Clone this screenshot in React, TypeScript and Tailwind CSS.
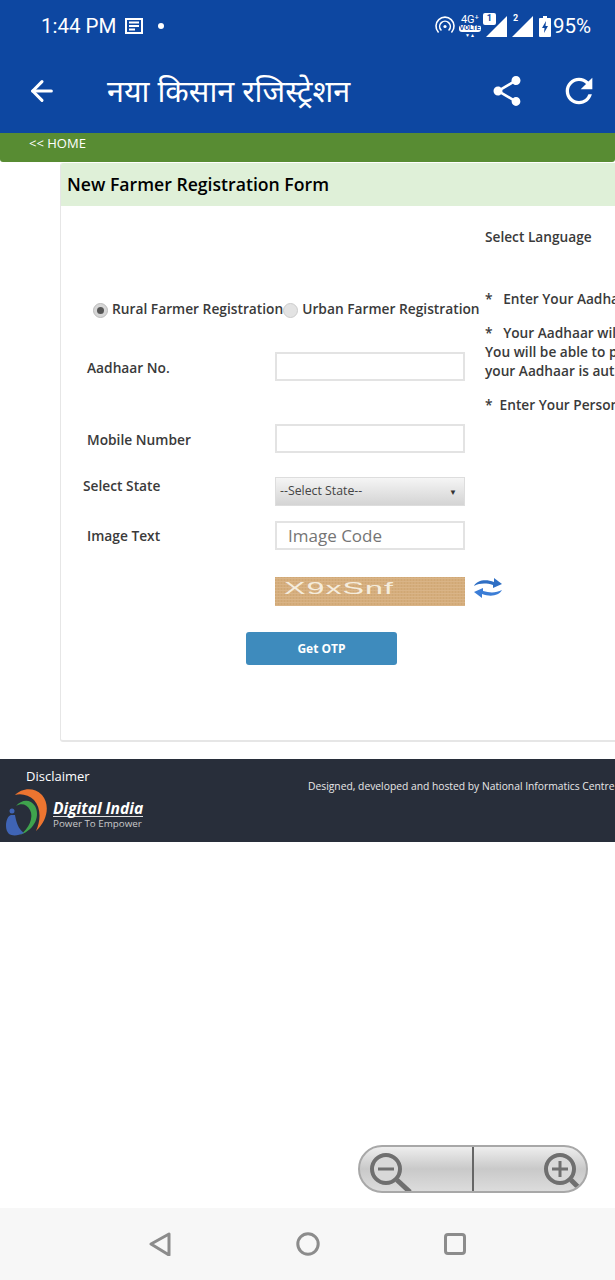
import { ArrowLeft } from "lucide-react";

const openSans = "font-['Open_Sans',sans-serif]";

function StatusBar() {
    return (
        <div className="flex h-[52px] items-center justify-between pl-[41px] pr-[24px] font-['Roboto',sans-serif] text-white">
            <div className="flex items-center">
                <span className="text-[20.5px] leading-none">1:44 PM</span>
                <svg width="18" height="16" viewBox="0 0 18 16" className="ml-[9px]">
                    <path d="M1 1h16v14H1z" fill="none" stroke="#fff" strokeWidth="2" />
                    <path d="M4 4.5h10M4 8h10M4 11.5h6" stroke="#fff" strokeWidth="2" />
                </svg>
                <span className="ml-[15px] h-[6px] w-[6px] rounded-full bg-white" />
            </div>
            <div className="flex items-center">
                <svg width="20" height="20" viewBox="0 0 20 20" fill="none" stroke="#fff" strokeWidth="1.6" strokeLinecap="round">
                    <path d="M3.2 16A9 9 0 1 1 16.8 16" />
                    <path d="M6 14a5.3 5.3 0 1 1 8 0" />
                    <circle cx="10" cy="10.5" r="1.6" fill="#fff" stroke="none" />
                </svg>
                <div className="ml-[3px] flex w-[24px] flex-col items-center leading-none">
                    <span className="text-[11px] leading-[11px]">4G⁺</span>
                    <span className="rounded-[3px] bg-white px-[1px] text-[7px] font-bold leading-[7px] text-[#0d47a1]">VOLTE</span>
                    <span className="text-[5px] leading-[7px]">▼▲</span>
                </div>
                <div className="relative ml-[3px] h-[24px] w-[24px]">
                    <svg width="24" height="24" viewBox="0 0 24 24" className="absolute left-0 top-0">
                        <path d="M1 23L22 2v21z" fill="#fff" />
                    </svg>
                    <span className="absolute -top-[1px] left-[-2px] flex h-[12px] w-[13px] items-center justify-center rounded-[2px] bg-white text-[9px] font-bold text-[#0d47a1]">1</span>
                </div>
                <div className="relative ml-[1px] h-[24px] w-[24px]">
                    <svg width="24" height="24" viewBox="0 0 24 24" className="absolute left-0 top-0">
                        <path d="M2 23L23 2v21z" fill="#fff" />
                    </svg>
                    <span className="absolute -top-[1px] left-[3px] text-[9px] font-bold leading-[11px]">2</span>
                </div>
                <svg width="12" height="21" viewBox="0 0 12 21" className="ml-[5px]">
                    <path d="M4 0h4v2h3a1 1 0 0 1 1 1v17a1 1 0 0 1-1 1H1a1 1 0 0 1-1-1V3a1 1 0 0 1 1-1h3z" fill="#fff" />
                    <path d="M7 5L3 12h2.5L5 17l4-7H6.5z" fill="#0d47a1" />
                </svg>
                <span className="ml-[2px] text-[20.5px] leading-none">95%</span>
            </div>
        </div>
    );
}

function AppBar() {
    return (
        <div className="flex h-[81px] items-center justify-between pb-[4px] pl-[26px] pr-[16px]">
            <div className="flex items-center">
                <ArrowLeft size={32} color="#fff" strokeWidth={2.3} />
                <span className="ml-[49px] font-['Noto_Sans','Noto_Sans_Devanagari','Lohit_Devanagari',sans-serif] text-[30.5px] leading-none text-white">
                    नया किसान रजिस्ट्रेशन
                </span>
            </div>
            <div className="flex items-center gap-[34px]">
                <svg width="36" height="36" viewBox="0 0 24 24" fill="#fff">
                    <path d="M18 16.08c-.76 0-1.44.3-1.96.77L8.91 12.7c.05-.23.09-.46.09-.7s-.04-.47-.09-.7l7.05-4.11c.54.5 1.25.81 2.04.81 1.66 0 3-1.34 3-3s-1.34-3-3-3-3 1.34-3 3c0 .24.04.47.09.7L8.04 9.81C7.5 9.31 6.79 9 6 9c-1.66 0-3 1.34-3 3s1.34 3 3 3c.79 0 1.5-.31 2.04-.81l7.12 4.16c-.05.21-.08.43-.08.65 0 1.61 1.31 2.92 2.92 2.92s2.92-1.31 2.92-2.92-1.31-2.92-2.92-2.92z" />
                </svg>
                <svg width="40" height="40" viewBox="0 0 24 24" fill="#fff">
                    <path d="M17.65 6.35A7.958 7.958 0 0 0 12 4c-4.42 0-7.99 3.58-7.99 8s3.57 8 7.99 8c3.73 0 6.84-2.55 7.73-6h-2.08A5.99 5.99 0 0 1 12 18c-3.31 0-6-2.69-6-6s2.69-6 6-6c1.66 0 3.14.69 4.22 1.78L13 11h7V4l-2.35 2.35z" />
                </svg>
            </div>
        </div>
    );
}

function FieldRow({ label, labelClass, children, className }: { label: string; labelClass?: string; children: React.ReactNode; className?: string }) {
    return (
        <div className={`flex items-start ${className ?? ""}`}>
            <span className={`text-[13.75px] font-semibold leading-[20px] text-[#3a3a3a] ${labelClass ?? "ml-[26px] mt-[6px] w-[188px]"}`}>{label}</span>
            {children}
        </div>
    );
}

function Captcha() {
    return (
        <div className="ml-[214px] mt-[27px] flex items-start">
            <div className="flex h-[29px] w-[190px] shrink-0 items-center overflow-hidden bg-[#d5ad7c] bg-[repeating-linear-gradient(0deg,#d9b487_0px,#d9b487_1px,transparent_1px,transparent_3px),repeating-linear-gradient(90deg,#d0a875_0px,#d0a875_1px,transparent_1px,transparent_3px)] pb-[6px] pl-[9px]">
                <span className="origin-left scale-x-[1.9] font-['Liberation_Sans',sans-serif] text-[17px] leading-none tracking-[0.5px] text-[#f5ecdc]">X9xSnf</span>
            </div>
            <svg width="30" height="22" viewBox="0 0 30 22" className="ml-[8px] shrink-0">
                <path d="M1 9C4 3 13 2 21 5V1l8 6-9 4V8C13 6 7 6 1 9z" fill="#2f6fc4" />
                <path d="M29 13c-3 6-12 7-20 4v4l-8-6 9-4v3c7 2 13 2 19-1z" fill="#3b7dd6" />
            </svg>
        </div>
    );
}

function FormLeft() {
    return (
        <div className="w-[424px] shrink-0">
            <div className="ml-[32px] mt-[93px] flex h-[20px] items-center whitespace-nowrap text-[13.75px] font-semibold text-[#3a3a3a]">
                <span className="mt-[3px] flex h-[15px] w-[15px] items-center justify-center rounded-full border border-[#bbb] bg-[#d6d6d6]">
                    <span className="h-[7px] w-[7px] rounded-full bg-[#555]" />
                </span>
                <span className="ml-[4px]">Rural Farmer Registration</span>
                <span className="mt-[3px] h-[15px] w-[15px] rounded-full border border-[#ccc] bg-[#e3e3e3]" />
                <span className="ml-[4px]">Urban Farmer Registration</span>
            </div>
            <FieldRow label="Aadhaar No." className="mt-[33px]">
                <input className="h-[29px] w-[190px] border-2 border-[#e3e3e3] bg-white" />
            </FieldRow>
            <FieldRow label="Mobile Number" className="mt-[43px]">
                <input className="h-[29px] w-[190px] border-2 border-[#e3e3e3] bg-white" />
            </FieldRow>
            <FieldRow label="Select State" labelClass="ml-[22px] -mt-[1px] w-[192px]" className="mt-[24px]">
                <div className="flex h-[29px] w-[190px] items-center justify-between border border-[#ddd] bg-gradient-to-b from-[#f5f5f5] to-[#d4d4d4] pl-[4px] pr-[7px] text-[12.3px] text-[#444]">
                    <span>--Select State--</span>
                    <span className="text-[8px] text-[#333]">▼</span>
                </div>
            </FieldRow>
            <FieldRow label="Image Text" labelClass="ml-[26px] mt-[5px] w-[188px]" className="mt-[15px]">
                <input placeholder="Image Code" className="h-[29px] w-[190px] border-2 border-[#e3e3e3] bg-white pl-[11px] text-[17px] placeholder:text-[#757575]" />
            </FieldRow>
            <Captcha />
            <button className="ml-[185px] mt-[26px] h-[33px] w-[151px] rounded-[3px] bg-[#3e8bbd] text-[12px] font-bold text-white">Get OTP</button>
        </div>
    );
}

function FormRight() {
    return (
        <div className="w-[400px] shrink-0 whitespace-nowrap text-[13.7px] font-semibold leading-[19px] text-[#3a3a3a]">
            <p className="mt-[21px]">Select Language</p>
            <p className="mt-[43px]">*&nbsp;&nbsp; Enter Your Aadhaar Number</p>
            <p className="mt-[15px]">*&nbsp;&nbsp; Your Aadhaar will be verified</p>
            <p>You will be able to proceed once</p>
            <p>your Aadhaar is authenticated</p>
            <p className="mt-[15px]">*&nbsp; Enter Your Personal Details</p>
        </div>
    );
}

export default function App() {
    return (
        <div className={`flex h-[1280px] w-[615px] flex-col overflow-hidden bg-white ${openSans}`}>
            <div className="h-[133px] shrink-0 bg-[#0d47a1]">
                <StatusBar />
                <AppBar />
            </div>
            <div className="h-[29px] shrink-0 rounded-b-[3px] bg-[#588c33] pl-[29px] text-[13px] leading-[20px] text-white">&lt;&lt; HOME</div>
            <div className="ml-[60px] mt-[1px] h-[579px] w-[700px] shrink-0 overflow-hidden rounded-[3px] border-b-2 border-l border-[#e6e6e6]">
                <div className="flex h-[43px] items-center bg-[#dff0d8] pl-[6px] text-[17.65px] font-semibold text-black">New Farmer Registration Form</div>
                <div className="flex">
                    <FormLeft />
                    <FormRight />
                </div>
            </div>
            <div className="mt-[17px] flex h-[83px] w-[615px] shrink-0 justify-between overflow-hidden bg-[#282e3a]">
                <div className="pl-[6px]">
                    <p className="ml-[20px] pt-[7px] text-[13px] leading-[20px] text-white">Disclaimer</p>
                    <div className="mt-[2px] flex items-start">
                        <svg width="42" height="48" viewBox="0 0 42 48">
                            <path d="M9 7C15 1 27-2 36 7c8 9 6 25-6 36 5-11 5-23-2-31C23 7 15 5 9 7z" fill="#ed7530" />
                            <path d="M10 18c5-6 14-8 19 0 5 9 1 23-15 29 9-6 14-18 10-25-3-6-9-7-14-4z" fill="#3fa34d" />
                            <path d="M0 38c0-6 2-10 5-11h4c1 6 3 14 9 18-6 3-12 3-15 1-2-2-3-5-3-8z" fill="#3f64b5" />
                            <circle cx="6" cy="23" r="2.5" fill="#3f64b5" />
                        </svg>
                        <div className="ml-[5px] mt-[12px] flex w-[90px] flex-col whitespace-nowrap">
                            <span className="border-b border-[#e0e0e0] text-[15.6px] font-bold italic leading-[16px] text-white">Digital India</span>
                            <span className="text-[9.8px] leading-[13px] text-[#c9c9c9]">Power To Empower</span>
                        </div>
                    </div>
                </div>
                <p className="w-[307px] shrink-0 whitespace-nowrap pt-[17px] text-[10.3px] leading-[20px] text-[#e8e8e8]">Designed, developed and hosted by National Informatics Centre</p>
            </div>
            <div className="relative min-h-0 flex-1">
                <div className="absolute bottom-[15px] right-[27px] flex h-[48px] w-[230px] overflow-hidden rounded-full border-2 border-[#a8a8a8] bg-gradient-to-b from-[#eeeeee] via-[#c9c9c9] to-[#dcdcdc]">
                    <div className="flex w-[114px] shrink-0 items-start border-r-2 border-[#666] pl-[9px] pt-[6px]">
                        <svg width="43" height="40" viewBox="0 0 43 40" fill="none" stroke="#6f6f6f">
                            <circle cx="17" cy="16" r="14" strokeWidth="4" fill="#d8d8d8" />
                            <path d="M9 16h16" strokeWidth="3" />
                            <path d="M28 27l13 12" strokeWidth="5" />
                        </svg>
                    </div>
                    <div className="flex flex-1 items-start justify-end pt-[6px]">
                        <svg width="43" height="40" viewBox="0 0 43 40" fill="none" stroke="#6f6f6f">
                            <circle cx="17" cy="16" r="14" strokeWidth="4" fill="#d8d8d8" />
                            <path d="M9 16h16M17 8v16" strokeWidth="3" />
                            <path d="M28 27l9 9" strokeWidth="5" />
                        </svg>
                    </div>
                </div>
            </div>
            <div className="flex h-[72px] shrink-0 items-center justify-between bg-[#f7f7f7] pb-[1px] pl-[149px] pr-[149px]">
                <svg width="22" height="24" viewBox="0 0 22 24" fill="none" stroke="#8c8c8c" strokeWidth="3" strokeLinejoin="round">
                    <path d="M2 12L20 2v21z" />
                </svg>
                <svg width="24" height="24" viewBox="0 0 24 24" fill="none" stroke="#8c8c8c" strokeWidth="3">
                    <circle cx="12" cy="12" r="10.2" />
                </svg>
                <svg width="22" height="22" viewBox="0 0 22 22" fill="none" stroke="#8c8c8c" strokeWidth="3">
                    <rect x="1.5" y="1.5" width="19" height="19" rx="2.5" />
                </svg>
            </div>
        </div>
    );
}
